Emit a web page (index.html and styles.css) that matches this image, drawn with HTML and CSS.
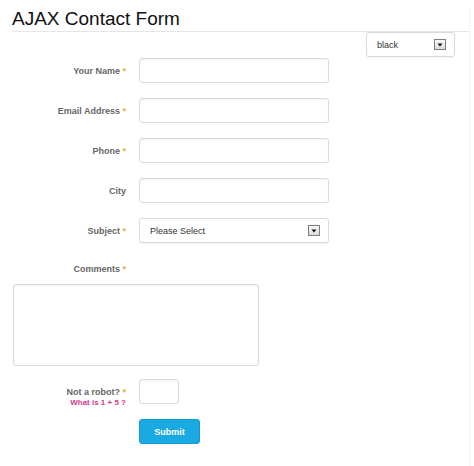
FILE: index.html
```html
<!DOCTYPE html>
<html lang="en">
<head>
    <meta charset="UTF-8">
    <meta name="viewport" content="width=device-width, initial-scale=1.0">
    <title>AJAX Contact Form</title>
    <link rel="stylesheet" href="styles.css">
</head>
<body>
    <div class="page">
        <h1 class="title">AJAX Contact Form</h1>
        <div class="theme-bar">
            <div class="select-box theme-select">
                <span>black</span>
                <svg class="arrow" width="12" height="11" viewBox="0 0 12 11">
                    <defs>
                        <linearGradient id="ag" x1="0" y1="0" x2="0" y2="1">
                            <stop offset="0" stop-color="#fafafa"/>
                            <stop offset="1" stop-color="#d9d9d9"/>
                        </linearGradient>
                    </defs>
                    <rect x="0.5" y="0.5" width="11" height="10" fill="url(#ag)" stroke="#7d7d7d"/>
                    <polygon points="3.5,4.5 8.5,4.5 6,7.5" fill="#111"/>
                </svg>
            </div>
        </div>

        <form class="contact-form" onsubmit="return false;">
            <div class="field-row">
                <label class="field-label">Your Name <span class="req">*</span></label>
                <input type="text" class="text-input">
            </div>
            <div class="field-row">
                <label class="field-label">Email Address <span class="req">*</span></label>
                <input type="text" class="text-input">
            </div>
            <div class="field-row">
                <label class="field-label">Phone <span class="req">*</span></label>
                <input type="text" class="text-input">
            </div>
            <div class="field-row">
                <label class="field-label">City</label>
                <input type="text" class="text-input">
            </div>
            <div class="field-row">
                <label class="field-label">Subject <span class="req">*</span></label>
                <div class="select-box subject-select">
                    <span>Please Select</span>
                    <svg class="arrow" width="12" height="11" viewBox="0 0 12 11">
                        <rect x="0.5" y="0.5" width="11" height="10" fill="url(#ag)" stroke="#7d7d7d"/>
                        <polygon points="3.5,4.5 8.5,4.5 6,7.5" fill="#111"/>
                    </svg>
                </div>
            </div>

            <label class="field-label comments-label">Comments <span class="req">*</span></label>
            <textarea class="comments"></textarea>

            <div class="field-row captcha-row">
                <div class="field-label captcha-label">
                    <div>Not a robot? <span class="req">*</span></div>
                    <div class="question">What is 1 + 5 ?</div>
                </div>
                <input type="text" class="text-input captcha-input">
            </div>

            <button class="submit">Submit</button>
        </form>
    </div>
</body>
</html>
```

FILE: styles.css
```css
body {
    font-family: 'Liberation Sans', Arial, sans-serif;
    margin: 0;
    padding: 0;
    background-color: white;
    color: #333;
    overflow: hidden;
}

.page {
    width: 470px;
    height: 464px;
    border-right: 1px solid #f2f2f2;
    box-sizing: border-box;
}

.title {
    font-weight: normal;
    font-size: 19px;
    line-height: 24px;
    color: #111;
    margin: 7px 0 0 12px;
    border-bottom: 1px solid #e6e6e6;
}

.theme-bar {
    display: flex;
    justify-content: flex-end;
    padding-right: 14px;
}

.select-box {
    display: flex;
    align-items: center;
    justify-content: space-between;
    box-sizing: border-box;
    height: 25px;
    padding: 0 8px 0 10px;
    border: 1px solid #dadada;
    border-radius: 3px;
    background-color: white;
    box-shadow: 0 1px 1px rgba(0, 0, 0, 0.05);
    font-size: 9px;
    color: #333;
}

.theme-select {
    width: 89px;
}

.subject-select {
    width: 190px;
}

.arrow {
    display: block;
}

.contact-form {
    margin-top: 1px;
}

.field-row {
    display: flex;
    align-items: center;
    margin-bottom: 15px;
}

.field-label {
    width: 114px;
    padding-left: 12px;
    margin-right: 13px;
    text-align: right;
    font-size: 9px;
    font-weight: bold;
    color: #666;
    line-height: 14px;
}

.req {
    color: #f0a830;
}

.text-input {
    box-sizing: border-box;
    width: 190px;
    height: 25px;
    margin: 0;
    padding: 0 6px;
    border: 1px solid #dadada;
    border-radius: 3px;
    box-shadow: inset 0 1px 2px rgba(0, 0, 0, 0.05);
    outline: none;
}

.comments-label {
    display: block;
    padding-top: 4px;
}

.comments {
    display: block;
    box-sizing: border-box;
    width: 246px;
    height: 82px;
    margin: 8px 0 0 13px;
    border: 1px solid #dadada;
    border-radius: 3px;
    box-shadow: inset 0 1px 2px rgba(0, 0, 0, 0.05);
    resize: none;
    outline: none;
}

.captcha-row {
    align-items: flex-start;
    margin-top: 13px;
    margin-bottom: 11px;
}

.captcha-label {
    padding-top: 7px;
    line-height: 12px;
}

.question {
    font-size: 8px;
    line-height: 10px;
    color: #d63a8c;
}

.captcha-input {
    width: 40px;
}

.submit {
    display: block;
    width: 61px;
    height: 25px;
    margin-left: 139px;
    padding: 0;
    border: 1px solid #109dd3;
    border-radius: 3px;
    background-color: #19aae2;
    color: white;
    font-family: 'Liberation Sans', Arial, sans-serif;
    font-size: 9px;
    font-weight: bold;
    cursor: pointer;
}
```
